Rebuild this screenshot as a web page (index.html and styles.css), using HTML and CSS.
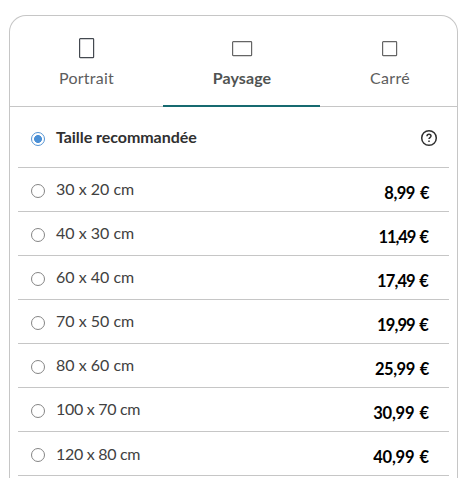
FILE: index.html
```html
<!DOCTYPE html>
<html lang="fr">
<head>
<meta charset="utf-8">
<title>Formats</title>
<link rel="stylesheet" href="styles.css">
</head>
<body>
<main class="card">
  <nav class="tabs">
    <div class="tab tab-portrait"><span class="icon"><svg width="16" height="21"><rect x=".6" y=".6" width="14" height="19" rx=".7"/></svg></span><span class="portrait-label">Portrait</span></div>
    <div class="tab active"><span class="icon"><svg width="21" height="16"><rect x=".6" y=".6" width="19" height="14" rx=".7"/></svg></span><span class="landscape-label">Paysage</span></div>
    <div class="tab tab-square"><span class="icon"><svg width="16" height="16"><rect x=".6" y=".6" width="14" height="14" rx=".7"/></svg></span><span class="square-label">Carré</span></div>
  </nav>
  <section class="sizes">
    <div class="row heading"><i class="radio checked"></i><span class="title">Taille recommandée</span><svg class="help" width="18" height="18"><circle cx="9" cy="9" r="7.3"/><path d="M7 7.2C7 5.9 7.9 5.2 9 5.2s2 .7 2 1.8c0 1.5-2 1.6-2 3.1"/><path d="M9 11.4v1.6"/></svg></div>
    <div class="row"><i class="radio"></i><span class="size">30 x 20 cm</span><b class="price short">8,99 €</b></div>
    <div class="row"><i class="radio"></i><span class="size">40 x 30 cm</span><b class="price narrowest">11,49 €</b></div>
    <div class="row"><i class="radio"></i><span class="size">60 x 40 cm</span><b class="price narrow">17,49 €</b></div>
    <div class="row"><i class="radio"></i><span class="size">70 x 50 cm</span><b class="price narrow">19,99 €</b></div>
    <div class="row"><i class="radio"></i><span class="size">80 x 60 cm</span><b class="price medium">25,99 €</b></div>
    <div class="row"><i class="radio"></i><span class="size long">100 x 70 cm</span><b class="price">30,99 €</b></div>
    <div class="row last"><i class="radio"></i><span class="size long">120 x 80 cm</span><b class="price">40,99 €</b></div>
  </section>
</main>
</body>
</html>
```
FILE: styles.css
```css
* { box-sizing: border-box; }
body {
  margin: 0;
  height: 478px;
  overflow: hidden;
  background: #fff;
  color: #414141;
  font: 16px/20px Lato, sans-serif;
}
.card {
  margin: 15px 3px 0 9px;
  height: 463px;
  border: 1px solid #c6c6c6;
  border-bottom: 0;
  border-radius: 17px 17px 0 0;
}
.tabs {
  display: grid;
  grid-template-columns: 153px 157px 1fr;
  height: 91px;
}
.tab {
  display: flex;
  flex-direction: column;
  align-items: center;
  padding-top: 21px;
  border-bottom: 1px solid #c6c6c6;
  color: #5d5d5d;
}
.tab.active {
  padding-left: 1px;
  border-bottom: 2px solid #166a70;
  color: #505352;
  font-weight: 700;
}
.tab-square { padding-left: 3px; }
.portrait-label { letter-spacing: .25px; }
.landscape-label { letter-spacing: .1px; }
.square-label { letter-spacing: .3px; }
.icon {
  display: flex;
  align-items: center;
  height: 23px;
  margin-bottom: 8px;
}
.icon svg { fill: none; stroke: #656565; stroke-width: 1.2; }
.tab-portrait .icon svg { stroke: #444950; }
.sizes { padding: 0 8px; }
.row {
  display: flex;
  align-items: flex-start;
  height: 44px;
  padding: 0 20px 0 13px;
  border-bottom: 1px solid #c6c6c6;
}
.row.heading {
  height: 61px;
  padding: 9px 11px 0 13px;
}
.radio {
  width: 14px;
  height: 14px;
  margin: 16px 11px 0 0;
  border: 1px solid #858585;
  border-radius: 50%;
}
.radio.checked {
  border-color: #5594d3;
  background: radial-gradient(circle, #4b90d6 3.6px, #fff 4.3px);
}
.size { margin-top: 11px; }
.last .size { margin-top: 12px; }
.long { letter-spacing: -.3px; }
.title { margin-top: 11px; color: #303030; font-weight: 700; letter-spacing: -.05px; }
.price {
  margin: 15px 0 0 auto;
  color: #000;
  font-size: 16.5px;
  letter-spacing: -.2px;
  word-spacing: 1.5px;
}
.price.medium { letter-spacing: -.45px; }
.price.short { letter-spacing: -.5px; }
.price.narrow { margin-right: 1px; letter-spacing: -.9px; }
.price.narrowest { margin-right: 1px; letter-spacing: -1.1px; }
.help {
  margin: 13px 0 0 auto;
  fill: none;
  stroke: #303030;
  stroke-width: 1.5;
}
```
